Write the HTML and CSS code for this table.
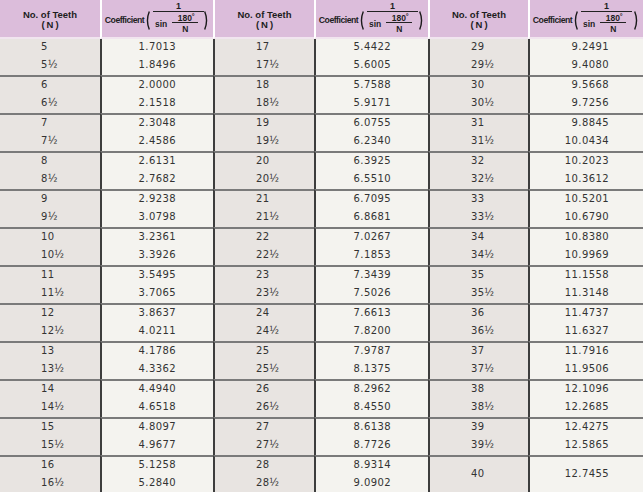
FILE: index.html
```html
<!DOCTYPE html>
<html>
<head>
<meta charset="utf-8">
<link rel="stylesheet" href="styles.css">
</head>
<body>
<table class="tbl">
<thead>
<tr>
<th class="h w1"><div class="hn">No. of Teeth<br><span class="pn">(N)</span></div></th>
<th class="h w2"><div class="hc"><span class="clabel">Coefficient</span><svg class="paren" viewBox="0 0 5 19" width="5" height="19"><path d="M4.3 0.5 Q0.6 9.5 4.3 18.5" /></svg><span class="frac"><span class="num">1</span><span class="den"><span class="sin">sin</span><span class="frac2"><span class="n2">180˚</span><span class="d2">N</span></span></span></span><svg class="paren pr" viewBox="0 0 5 19" width="5" height="19"><path d="M0.7 0.5 Q4.4 9.5 0.7 18.5" /></svg></div></th>
<th class="h w3"><div class="hn">No. of Teeth<br><span class="pn">(N)</span></div></th>
<th class="h w4"><div class="hc"><span class="clabel">Coefficient</span><svg class="paren" viewBox="0 0 5 19" width="5" height="19"><path d="M4.3 0.5 Q0.6 9.5 4.3 18.5" /></svg><span class="frac"><span class="num">1</span><span class="den"><span class="sin">sin</span><span class="frac2"><span class="n2">180˚</span><span class="d2">N</span></span></span></span><svg class="paren pr" viewBox="0 0 5 19" width="5" height="19"><path d="M0.7 0.5 Q4.4 9.5 0.7 18.5" /></svg></div></th>
<th class="h w5"><div class="hn">No. of Teeth<br><span class="pn">(N)</span></div></th>
<th class="h w6"><div class="hc"><span class="clabel">Coefficient</span><svg class="paren" viewBox="0 0 5 19" width="5" height="19"><path d="M4.3 0.5 Q0.6 9.5 4.3 18.5" /></svg><span class="frac"><span class="num">1</span><span class="den"><span class="sin">sin</span><span class="frac2"><span class="n2">180˚</span><span class="d2">N</span></span></span></span><svg class="paren pr" viewBox="0 0 5 19" width="5" height="19"><path d="M0.7 0.5 Q4.4 9.5 0.7 18.5" /></svg></div></th>
</tr>
</thead>
<tbody>
<tr><td class="n">5</td><td class="c">1.7013</td><td class="n">17</td><td class="c">5.4422</td><td class="n">29</td><td class="c c6">9.2491</td></tr>
<tr><td class="n">5½</td><td class="c">1.8496</td><td class="n">17½</td><td class="c">5.6005</td><td class="n">29½</td><td class="c c6">9.4080</td></tr>
<tr class="g"><td class="n">6</td><td class="c">2.0000</td><td class="n">18</td><td class="c">5.7588</td><td class="n">30</td><td class="c c6">9.5668</td></tr>
<tr><td class="n">6½</td><td class="c">2.1518</td><td class="n">18½</td><td class="c">5.9171</td><td class="n">30½</td><td class="c c6">9.7256</td></tr>
<tr class="g"><td class="n">7</td><td class="c">2.3048</td><td class="n">19</td><td class="c">6.0755</td><td class="n">31</td><td class="c c6">9.8845</td></tr>
<tr><td class="n">7½</td><td class="c">2.4586</td><td class="n">19½</td><td class="c">6.2340</td><td class="n">31½</td><td class="c c6">10.0434</td></tr>
<tr class="g"><td class="n">8</td><td class="c">2.6131</td><td class="n">20</td><td class="c">6.3925</td><td class="n">32</td><td class="c c6">10.2023</td></tr>
<tr><td class="n">8½</td><td class="c">2.7682</td><td class="n">20½</td><td class="c">6.5510</td><td class="n">32½</td><td class="c c6">10.3612</td></tr>
<tr class="g"><td class="n">9</td><td class="c">2.9238</td><td class="n">21</td><td class="c">6.7095</td><td class="n">33</td><td class="c c6">10.5201</td></tr>
<tr><td class="n">9½</td><td class="c">3.0798</td><td class="n">21½</td><td class="c">6.8681</td><td class="n">33½</td><td class="c c6">10.6790</td></tr>
<tr class="g"><td class="n">10</td><td class="c">3.2361</td><td class="n">22</td><td class="c">7.0267</td><td class="n">34</td><td class="c c6">10.8380</td></tr>
<tr><td class="n">10½</td><td class="c">3.3926</td><td class="n">22½</td><td class="c">7.1853</td><td class="n">34½</td><td class="c c6">10.9969</td></tr>
<tr class="g"><td class="n">11</td><td class="c">3.5495</td><td class="n">23</td><td class="c">7.3439</td><td class="n">35</td><td class="c c6">11.1558</td></tr>
<tr><td class="n">11½</td><td class="c">3.7065</td><td class="n">23½</td><td class="c">7.5026</td><td class="n">35½</td><td class="c c6">11.3148</td></tr>
<tr class="g"><td class="n">12</td><td class="c">3.8637</td><td class="n">24</td><td class="c">7.6613</td><td class="n">36</td><td class="c c6">11.4737</td></tr>
<tr><td class="n">12½</td><td class="c">4.0211</td><td class="n">24½</td><td class="c">7.8200</td><td class="n">36½</td><td class="c c6">11.6327</td></tr>
<tr class="g"><td class="n">13</td><td class="c">4.1786</td><td class="n">25</td><td class="c">7.9787</td><td class="n">37</td><td class="c c6">11.7916</td></tr>
<tr><td class="n">13½</td><td class="c">4.3362</td><td class="n">25½</td><td class="c">8.1375</td><td class="n">37½</td><td class="c c6">11.9506</td></tr>
<tr class="g"><td class="n">14</td><td class="c">4.4940</td><td class="n">26</td><td class="c">8.2962</td><td class="n">38</td><td class="c c6">12.1096</td></tr>
<tr><td class="n">14½</td><td class="c">4.6518</td><td class="n">26½</td><td class="c">8.4550</td><td class="n">38½</td><td class="c c6">12.2685</td></tr>
<tr class="g"><td class="n">15</td><td class="c">4.8097</td><td class="n">27</td><td class="c">8.6138</td><td class="n">39</td><td class="c c6">12.4275</td></tr>
<tr><td class="n">15½</td><td class="c">4.9677</td><td class="n">27½</td><td class="c">8.7726</td><td class="n">39½</td><td class="c c6">12.5865</td></tr>
<tr class="g"><td class="n">16</td><td class="c">5.1258</td><td class="n">28</td><td class="c">8.9314</td><td class="n" rowspan="2">40</td><td class="c c6" rowspan="2">12.7455</td></tr>
<tr><td class="n">16½</td><td class="c">5.2840</td><td class="n">28½</td><td class="c">9.0902</td></tr>
</tbody>
</table>
</body>
</html>
```
FILE: styles.css
```css
html,
body {
  overflow: hidden;
}

body {
  margin: 0;
  background: #ffffff;
}

.tbl {
  border-collapse: separate;
  border-spacing: 0;
  table-layout: fixed;
  width: 643px;
  font-family: "DejaVu Sans", sans-serif;
  font-size: 10px;
  color: #333333;
}

.h {
  background: #dcbddb;
  height: 37px;
  padding: 0;
  border-bottom: 2px solid #f1e5ef;
  vertical-align: middle;
  font-family: "Liberation Sans", Arial, sans-serif;
  font-weight: bold;
  color: #1e1e1e;
  overflow: hidden;
}

.h + .h {
  border-left: 2px solid #ffffff;
}

.w1 { width: 100px; }
.w2 { width: 111px; }
.w3 { width: 99px; }
.w4 { width: 112px; }
.w5 { width: 98px; }
.w6 { width: 113px; }

.hn {
  text-align: center;
  font-size: 9.5px;
  line-height: 10px;
  padding-top: 3px;
}

.pn {
  letter-spacing: 2px;
  padding-left: 2px;
}

.hc {
  display: flex;
  align-items: center;
  padding-left: 2px;
  height: 37px;
}

.clabel {
  flex: none;
  font-size: 8.7px;
  letter-spacing: -0.5px;
  width: 41px;
  margin-top: 3px;
  white-space: nowrap;
  overflow: hidden;
}

.paren {
  flex: none;
  margin-top: 4px;
  fill: none;
  stroke: #1a1a1a;
  stroke-width: 1.4;
}

.pr {
  margin-left: auto;
  margin-right: 4px;
}

.frac {
  flex: none;
  display: flex;
  flex-direction: column;
  width: 51px;
  margin: 0 0 0 3px;
}

.num {
  font-size: 9px;
  line-height: 9px;
  height: 9px;
  text-align: center;
  border-bottom: 1px solid #222;
}

.den {
  display: flex;
  align-items: center;
  padding-left: 2px;
}

.sin {
  font-size: 8.5px;
  margin-right: 5px;
  margin-top: 1px;
}

.frac2 {
  display: flex;
  flex-direction: column;
  width: 26px;
  text-align: center;
}

.n2 {
  font-size: 8.5px;
  line-height: 8px;
  padding-top: 2px;
  border-bottom: 1px solid #222;
  padding-left: 2px;
}

.d2 {
  font-size: 8.5px;
  line-height: 12px;
}

td {
  height: 16px;
  line-height: 16px;
  padding: 0 0 2px;
  white-space: nowrap;
}

td + td {
  border-left: 2px solid #3d3d3d;
}

tr.g td {
  border-top: 2px solid #7a7a7a;
}

.n {
  background: #e8e4e1;
  text-align: left;
  padding-left: 41px;
  letter-spacing: 0.3px;
}

.c {
  background: #f4f3ef;
  text-align: right;
  padding-right: 37px;
  letter-spacing: 0.4px;
}

.c6 {
  padding-right: 34px;
}
```
